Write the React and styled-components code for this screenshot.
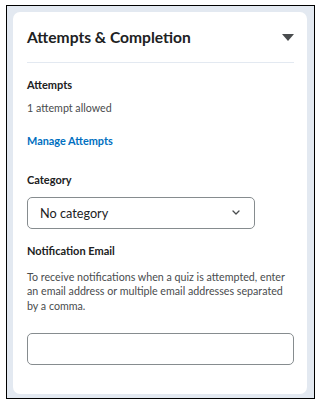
import React from "react";
import styled, { createGlobalStyle } from "styled-components";

const GlobalStyle = createGlobalStyle`
  body {
    margin: 0;
    font-family: Lato, "Open Sans", sans-serif;
    background: #fff;
  }
`;

const Frame = styled.div`
  margin: 5px 0 0 6px;
  width: 309px;
  height: 394px;
  box-sizing: border-box;
  border: 1px solid #000;
  background: #e3e9f1;
  padding: 6px 7px 4px 6px;
  display: flex;
`;

const Card = styled.section`
  flex: 1;
  background: #fff;
  border-radius: 7px;
  padding: 0 13px 0 14px;
  display: flex;
  flex-direction: column;
`;

const Header = styled.div`
  display: flex;
  align-items: center;
  justify-content: space-between;
  height: 50px;
  border-bottom: 1px solid #e3e9f1;
`;

const Title = styled.h2`
  margin: 0;
  font-size: 15.6px;
  font-weight: 700;
  color: #202122;
`;

const Caret = styled.span`
  width: 0;
  height: 0;
  border-left: 6px solid transparent;
  border-right: 6px solid transparent;
  border-top: 7px solid #494c4e;
  margin-right: 0;
`;

const Label = styled.div`
  font-size: 11px;
  line-height: 14px;
  font-weight: 700;
  color: #202122;
  margin-top: ${({ $top }) => $top}px;
`;

const Text = styled.p`
  margin: ${({ $top }) => $top}px 0 0;
  font-size: 10.7px;
  line-height: 14.7px;
  color: #494c4e;
`;

const Link = styled.a`
  margin-top: 18px;
  font-size: 10.9px;
  line-height: 14px;
  font-weight: 700;
  color: #006fbf;
  text-decoration: none;
`;

const Select = styled.div`
  margin-top: 10px;
  width: 228px;
  height: 32px;
  box-sizing: border-box;
  border: 1px solid #868c8f;
  border-radius: 5px;
  display: flex;
  align-items: center;
  justify-content: space-between;
  padding: 0 14px 0 12px;
  font-size: 12.7px;
  color: #202122;
`;

const Input = styled.div`
  margin-top: 19px;
  height: 32px;
  box-sizing: border-box;
  border: 1px solid #868c8f;
  border-radius: 5px;
`;

export default function App() {
  return (
    <>
      <GlobalStyle />
      <Frame>
        <Card>
          <Header>
            <Title>Attempts &amp; Completion</Title>
            <Caret />
          </Header>
          <Label $top={15}>Attempts</Label>
          <Text $top={9}>1 attempt allowed</Text>
          <Link href="#">Manage Attempts</Link>
          <Label $top={25}>Category</Label>
          <Select>
            <span>No category</span>
            <svg width="8" height="5" viewBox="0 0 8 5">
              <path d="M1 1l3 3 3-3" fill="none" stroke="#494c4e" strokeWidth="1.3" strokeLinecap="round" strokeLinejoin="round" />
            </svg>
          </Select>
          <Label $top={15}>Notification Email</Label>
          <Text $top={12}>
            To receive notifications when a quiz is attempted, enter an email
            address or multiple email addresses separated by a comma.
          </Text>
          <Input />
        </Card>
      </Frame>
    </>
  );
}
